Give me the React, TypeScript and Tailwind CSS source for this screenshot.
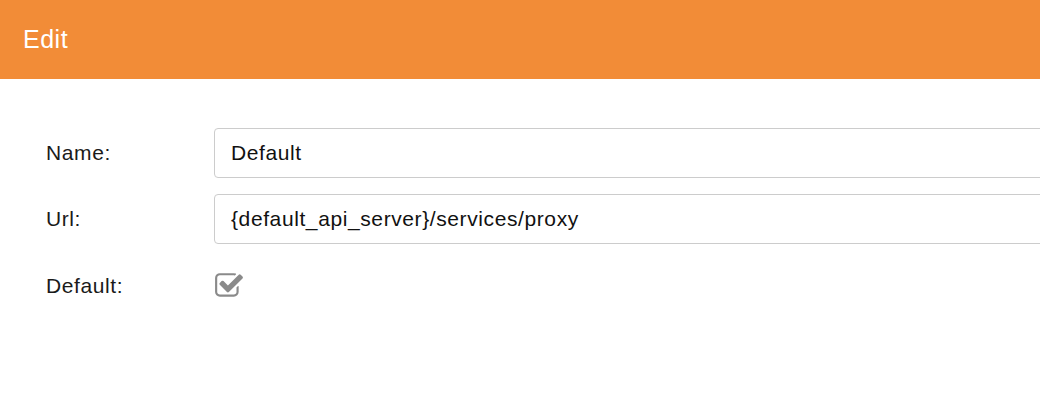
import React from "react";

function CheckSquareO() {
  return (
    <svg width="30" height="30" viewBox="0 0 1792 1792" fill="#8a8a8a">
      <path d="M1472 930v318q0 119-84.5 203.5t-203.5 84.5h-832q-119 0-203.5-84.5t-84.5-203.5v-832q0-119 84.5-203.5t203.5-84.5h832q63 0 117 25 15 7 18 23 3 17-9 29l-49 49q-10 10-23 10-3 0-9-2-23-6-45-6h-832q-66 0-113 47t-47 113v832q0 66 47 113t113 47h832q66 0 113-47t47-113v-254q0-13 9-22l64-64q10-10 23-10 6 0 12 3 20 8 20 29zm231-489l-814 814q-24 24-57 24t-57-24l-430-430q-24-24-24-57t24-57l110-110q24-24 57-24t57 24l263 263 647-647q24-24 57-24t57 24l110 110q24 24 24 57t-24 57z" />
    </svg>
  );
}

export default function App() {
  const font = { fontFamily: '"Liberation Sans", Arial, sans-serif' };
  return (
    <div className="w-[1040px] h-[414px] overflow-hidden bg-white" style={font}>
      <div className="h-[79px] bg-[#f28c37] flex items-center pl-[23px]">
        <span className="text-white text-[25px] tracking-[0.5px]">Edit</span>
      </div>
      <div className="pt-[49px] pl-[46px] flex flex-col">
        <div className="flex items-center h-[50px]">
          <div className="w-[168px] shrink-0 text-[21px] text-[#1a1a1a] tracking-[0.6px]">Name:</div>
          <div className="w-[860px] h-[50px] border border-[#cccccc] rounded-[4px] flex items-center pl-[16px] text-[21px] text-[#111] tracking-[0.6px] shrink-0">
            Default
          </div>
        </div>
        <div className="flex items-center h-[50px] mt-[16px]">
          <div className="w-[168px] shrink-0 text-[21px] text-[#1a1a1a] tracking-[0.6px]">Url:</div>
          <div className="w-[860px] h-[50px] border border-[#cccccc] rounded-[4px] flex items-center pl-[16px] text-[21px] text-[#111] tracking-[0.6px] shrink-0">
            {"{default_api_server}/services/proxy"}
          </div>
        </div>
        <div className="flex items-center h-[30px] mt-[27px]">
          <div className="w-[168px] shrink-0 text-[21px] text-[#1a1a1a] tracking-[0.6px]">Default:</div>
          <CheckSquareO />
        </div>
      </div>
    </div>
  );
}
